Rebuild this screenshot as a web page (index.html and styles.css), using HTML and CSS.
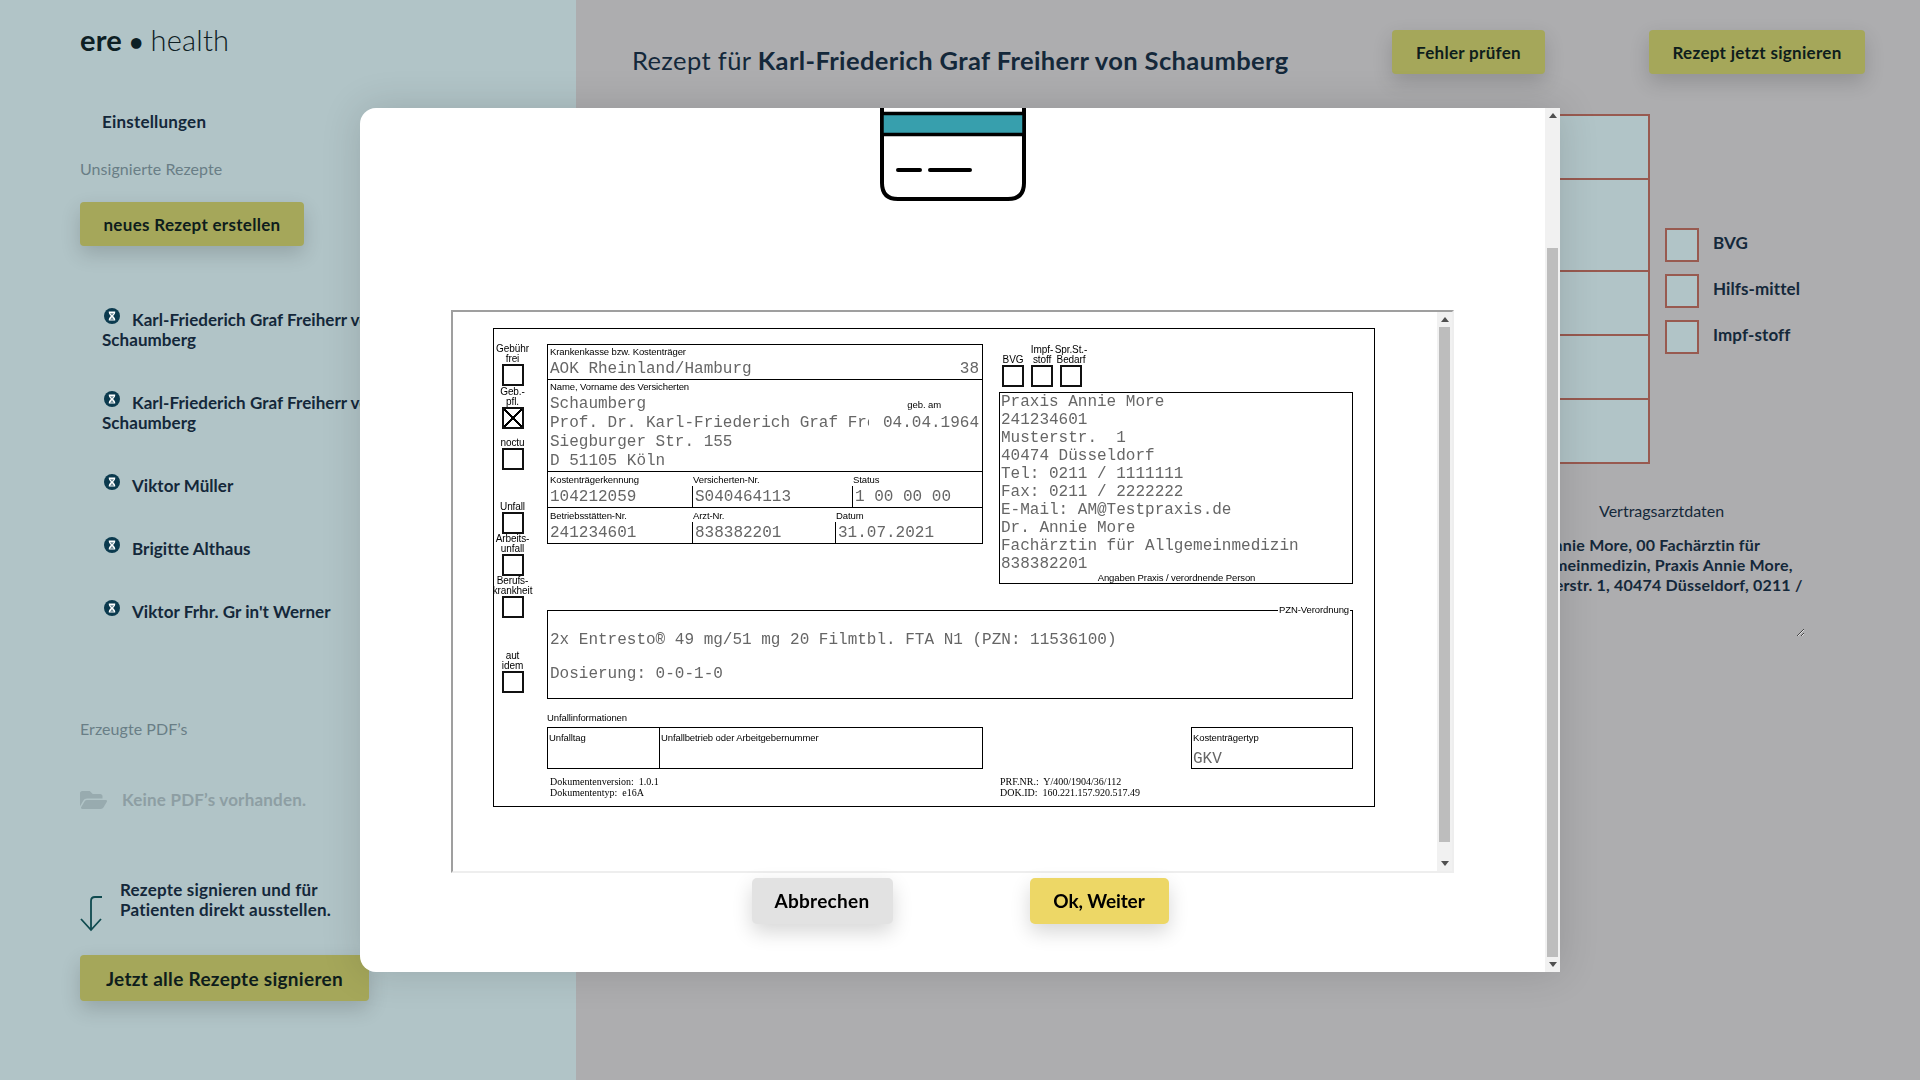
FILE: index.html
```html
<!DOCTYPE html>
<html lang="de">
<head>
    <meta charset="utf-8"/>
    <title>ere health</title>
    <link rel="stylesheet" href="styles.css">
</head>
<body>
    <svg class="defs" width="0" height="0">
        <symbol id="hourglass" viewBox="0 0 16 16">
            <circle cx="8" cy="8" r="8" fill="#0b3a4e"/>
            <path d="M4.800 3.400h6.400v1.200c0 1.500-1.500 2.400-2 3.400.5 1 2 1.900 2 3.400v1.200H4.800v-1.200c0-1.500 1.500-2.400 2-3.400-.5-1-2-1.900-2-3.400z" fill="#fff"/>
            <path d="M6 5.200h4L8 7.600zM8 9l2 2.700H6z" fill="#6d8a96"/>
        </symbol>
    </svg>

    <aside class="sidebar">
        <div class="logo"><b>ere</b> <span class="logo-dot">•</span> <span class="logo-light">health</span></div>
        <div class="settings">Einstellungen</div>
        <div class="side-title">Unsignierte Rezepte</div>
        <button class="btn new-btn">neues Rezept erstellen</button>
        <ul class="rx-list">
            <li><svg class="hourglass"><use href="#hourglass"/></svg>Karl-Friederich Graf Freiherr von<br>Schaumberg</li>
            <li><svg class="hourglass"><use href="#hourglass"/></svg>Karl-Friederich Graf Freiherr von<br>Schaumberg</li>
            <li><svg class="hourglass"><use href="#hourglass"/></svg>Viktor Müller</li>
            <li><svg class="hourglass"><use href="#hourglass"/></svg>Brigitte Althaus</li>
            <li><svg class="hourglass"><use href="#hourglass"/></svg>Viktor Frhr. Gr in't Werner</li>
        </ul>
        <div class="side-title pdf-title">Erzeugte PDF’s</div>
        <div class="no-pdf">
            <svg class="folder" viewBox="0 0 576 512"><path d="M572.694 292.093L500.27 416.248A63.997 63.997 0 0 1 444.989 448H45.025c-18.523 0-30.064-20.093-20.731-36.093l72.424-124.155A64 64 0 0 1 152 256h399.964c18.523 0 30.064 20.093 20.73 36.093zM152 224h328v-48c0-26.51-21.49-48-48-48H272l-64-64H48C21.49 64 0 85.49 0 112v278.046l69.077-118.418C86.214 242.25 117.989 224 152 224z"/></svg>
            Keine PDF’s vorhanden.
        </div>
        <div class="sign-hint">
            <svg class="hint-arrow" viewBox="0 0 24 36" fill="none" stroke="#0f4a4f" stroke-width="1.8"><path d="M22 1h-7q-4 0-4 4v29"/><path d="M1 23l10 11 10-11"/></svg>
            <p>Rezepte signieren und für<br>Patienten direkt ausstellen.</p>
        </div>
        <button class="btn sign-all">Jetzt alle Rezepte signieren</button>
    </aside>

    <main class="main">
        <header class="main-head">
            <h1>Rezept für <b>Karl-Friederich Graf Freiherr von Schaumberg</b></h1>
            <button class="btn head-btn check-btn">Fehler prüfen</button>
            <button class="btn head-btn sign-btn">Rezept jetzt signieren</button>
        </header>
        <div class="rx-form">
            <div class="rx-lines">
                <div class="rx-line"></div>
                <div class="rx-line rx-line-tall"></div>
                <div class="rx-line"></div>
                <div class="rx-line"></div>
                <div class="rx-line"></div>
            </div>
            <div class="rx-checks">
                <label class="rx-check"><span class="rx-box"></span>BVG</label>
                <label class="rx-check"><span class="rx-box"></span>Hilfs-mittel</label>
                <label class="rx-check"><span class="rx-box"></span>Impf-stoff</label>
            </div>
        </div>
        <div class="doctor">
            <div class="doctor-title">Vertragsarztdaten</div>
            <textarea class="doctor-text" readonly>Dr. Annie More, 00 Fachärztin für
Allgemeinmedizin, Praxis Annie More,
Musterstr. 1, 40474 Düsseldorf, 0211 /</textarea>
        </div>
    </main>

    <div class="modal">
        <div class="modal-body">
            <svg class="card-icon" viewBox="0 0 146 93">
                <path d="M2 0v75q0 16 16 16h110q16 0 16-16V0" fill="#fff" stroke="#000" stroke-width="4"/>
                <rect x="2" y="5.500" width="142" height="21" fill="#379fad" stroke="#000" stroke-width="3.500"/>
                <path d="M18 62h22M50 62h40" stroke="#000" stroke-width="4" stroke-linecap="round"/>
            </svg>

            <div class="viewer">
                <div class="viewer-page">
                    <div class="sheet">
                        <div class="flags">
                            <div class="flag"><span>Gebühr<br>frei</span><i></i></div>
                            <div class="flag flag-geb"><span>Geb.-<br>pfl.</span><i class="crossed"></i></div>
                            <div class="flag flag-noctu"><span>noctu</span><i></i></div>
                            <div class="flag flag-unfall"><span>Unfall</span><i></i></div>
                            <div class="flag"><span>Arbeits-<br>unfall</span><i></i></div>
                            <div class="flag"><span>Berufs-<br>krankheit</span><i></i></div>
                            <div class="flag flag-idem"><span>aut<br>idem</span><i></i></div>
                        </div>
                        <div class="sheet-body">
                            <div class="sheet-top">
                                <div class="patient">
                                    <div class="patient-row row-kasse">
                                        <div class="lbl">Krankenkasse bzw. Kostenträger</div>
                                        <div class="val spread"><span>AOK Rheinland/Hamburg</span><span>38</span></div>
                                    </div>
                                    <div class="patient-row row-name">
                                        <div class="lbl">Name, Vorname des Versicherten</div>
                                        <div class="val name-val spread"><span>Schaumberg</span><span class="lbl born">geb. am</span></div>
                                        <div class="val name-val spread"><span class="clip">Prof. Dr. Karl-Friederich Graf Fre</span><span>04.04.1964</span></div>
                                        <div class="val name-val">Siegburger Str. 155</div>
                                        <div class="val name-val">D 51105 Köln</div>
                                    </div>
                                    <div class="patient-row row-ids">
                                        <div class="cell cell-a"><div class="lbl">Kostenträgerkennung</div><div class="val">104212059</div></div>
                                        <div class="cell cell-b"><div class="lbl">Versicherten-Nr.</div><div class="val split">S040464113</div></div>
                                        <div class="cell"><div class="lbl">Status</div><div class="val split">1 00 00 00</div></div>
                                    </div>
                                    <div class="patient-row row-ids">
                                        <div class="cell cell-a"><div class="lbl">Betriebsstätten-Nr.</div><div class="val">241234601</div></div>
                                        <div class="cell cell-c"><div class="lbl">Arzt-Nr.</div><div class="val split">838382201</div></div>
                                        <div class="cell"><div class="lbl">Datum</div><div class="val split">31.07.2021</div></div>
                                    </div>
                                </div>
                                <div class="practice-col">
                                    <div class="mini-checks">
                                        <div class="mini"><span>BVG</span><i></i></div>
                                        <div class="mini"><span>Impf-<br>stoff</span><i></i></div>
                                        <div class="mini"><span>Spr.St.-<br>Bedarf</span><i></i></div>
                                    </div>
                                    <div class="practice">
                                        <div class="val">Praxis Annie More</div>
                                        <div class="val">241234601</div>
                                        <div class="val">Musterstr.&nbsp; 1</div>
                                        <div class="val">40474 Düsseldorf</div>
                                        <div class="val">Tel: 0211 / 1111111</div>
                                        <div class="val">Fax: 0211 / 2222222</div>
                                        <div class="val">E-Mail: AM@Testpraxis.de</div>
                                        <div class="val">Dr. Annie More</div>
                                        <div class="val">Fachärztin für Allgemeinmedizin</div>
                                        <div class="val">838382201</div>
                                        <div class="lbl practice-note">Angaben Praxis / verordnende Person</div>
                                    </div>
                                </div>
                            </div>

                            <fieldset class="pzn">
                                <legend align="right">PZN-Verordnung</legend>
                                <div class="val pzn-line">2x Entresto® 49 mg/51 mg 20 Filmtbl. FTA N1 (PZN: 11536100)</div>
                                <div class="val pzn-line">Dosierung: 0-0-1-0</div>
                            </fieldset>

                            <div class="lbl accident-title">Unfallinformationen</div>
                            <div class="accident">
                                <div class="accident-box">
                                    <div class="accident-day lbl">Unfalltag</div>
                                    <div class="accident-firm lbl">Unfallbetrieb oder Arbeitgebernummer</div>
                                </div>
                                <div class="cost-box">
                                    <div class="lbl">Kostenträgertyp</div>
                                    <div class="val">GKV</div>
                                </div>
                            </div>

                            <div class="doc-meta">
                                <div class="doc-meta-col">Dokumentenversion:&nbsp; 1.0.1<br>Dokumententyp:&nbsp; e16A</div>
                                <div class="doc-meta-col">PRF.NR.:&nbsp; Y/400/1904/36/112<br>DOK.ID:&nbsp; 160.221.157.920.517.49</div>
                            </div>
                        </div>
                    </div>
                </div>
                <div class="scrollbar">
                    <div class="arrow arrow-up"></div>
                    <div class="thumb viewer-thumb"></div>
                    <div class="arrow arrow-down"></div>
                </div>
            </div>

            <div class="modal-actions">
                <button class="btn cancel-btn">Abbrechen</button>
                <button class="btn ok-btn">Ok, Weiter</button>
            </div>
        </div>
        <div class="scrollbar">
            <div class="arrow arrow-up"></div>
            <div class="thumb modal-thumb"></div>
            <div class="arrow arrow-down"></div>
        </div>
    </div>
</body>
</html>
```
FILE: styles.css
```css
* {
    box-sizing: border-box;
}
html, body {
    margin: 0;
    height: 1080px;
    overflow: hidden;
}
body {
    display: flex;
    font-family: Lato, "Noto Sans", sans-serif;
    color: #14283a;
    background: #adadaf;
}
button {
    font-family: inherit;
}
.defs {
    position: absolute;
}
.btn {
    border: 0;
    border-radius: 4px;
    background: #a5a75a;
    color: #0e1d1c;
    font-weight: 700;
    box-shadow: 0 8px 20px rgba(0, 0, 0, 0.16);
    padding: 0;
}

/* sidebar */
.sidebar {
    flex: none;
    width: 576px;
    height: 1080px;
    padding: 20px 0 0 80px;
    background: #b1c4c7;
    font-size: 17px;
    font-weight: 700;
    line-height: 20px;
    letter-spacing: 0.2px;
}
.logo {
    height: 41px;
    font-size: 29px;
    line-height: 40px;
    color: #0d2024;
    letter-spacing: 0.2px;
}
.logo b {
    font-weight: 700;
}
.logo-dot {
    font-size: 24px;
}
.logo-light {
    font-weight: 300;
}
.settings {
    margin: 51px 0 0 22px;
}
.side-title {
    margin-top: 27px;
    font-size: 16px;
    font-weight: 400;
    color: #697e86;
    letter-spacing: 0.05px;
}
.new-btn {
    display: block;
    width: 224px;
    height: 44px;
    margin-top: 23px;
    font-size: 17px;
    letter-spacing: 0.3px;
}
.rx-list {
    list-style: none;
    margin: 64px 0 0 22px;
    padding: 0;
    white-space: nowrap;
    letter-spacing: 0.05px;
}
.rx-list li {
    margin-bottom: 43px;
}
.hourglass {
    width: 16px;
    height: 16px;
    margin: -4px 12px 0 2px;
    vertical-align: 2px;
}
.pdf-title {
    margin-top: 97px;
}
.no-pdf {
    display: flex;
    align-items: center;
    gap: 15px;
    margin-top: 49px;
    color: #8d9ea3;
}
.folder {
    width: 27px;
    height: 24px;
    fill: #98abaf;
}
.sign-hint {
    display: flex;
    align-items: flex-end;
    gap: 16px;
    margin-top: 68px;
}
.sign-hint p {
    margin: 0;
}
.hint-arrow {
    flex: none;
    width: 24px;
    height: 36px;
    margin-bottom: -12px;
}
.sign-all {
    display: block;
    width: 289px;
    height: 46px;
    margin-top: 35px;
    font-size: 19px;
    letter-spacing: 0.3px;
}

/* page behind the dialog */
.main {
    flex: 1;
    min-width: 0;
}
.main-head {
    display: flex;
    align-items: center;
    height: 44px;
    margin-top: 30px;
    padding: 0 55px 0 56px;
}
.main-head h1 {
    flex: 1;
    margin: 0;
    padding-top: 16px;
    font-size: 25.5px;
    font-weight: 400;
    letter-spacing: 0.38px;
    white-space: nowrap;
}
.head-btn {
    height: 44px;
    font-size: 17px;
    letter-spacing: 0.3px;
}
.check-btn {
    width: 153px;
    margin-right: 104px;
}
.sign-btn {
    width: 216px;
}
.rx-form {
    display: flex;
    margin: 40px 0 0 324px;
}
.rx-lines {
    width: 750px;
    border: 2px solid #985a50;
    border-bottom: 0;
}
.rx-line {
    height: 64px;
    background: #b1c4c7;
    border-bottom: 2px solid #985a50;
}
.rx-line-tall {
    height: 92px;
}
.rx-checks {
    display: flex;
    flex-direction: column;
    gap: 12px;
    margin: 114px 0 0 15px;
}
.rx-check {
    display: flex;
    align-items: flex-start;
    gap: 14px;
    font-size: 17px;
    font-weight: 700;
    line-height: 30px;
    letter-spacing: 0.1px;
}
.rx-box {
    width: 34px;
    height: 34px;
    background: #b1c4c7;
    border: 2px solid #985a50;
}
.doctor {
    margin: 37px 0 0 941px;
}
.doctor-title {
    margin-left: 82px;
    font-size: 16px;
    line-height: 20px;
}
.doctor-text {
    display: block;
    width: 288px;
    height: 102px;
    margin-top: 14px;
    padding: 0;
    border: 0;
    outline: 0;
    background: transparent;
    color: #14283a;
    font: 700 16px/20px Lato, "Noto Sans", sans-serif;
    letter-spacing: 0.2px;
    white-space: pre;
    overflow: hidden;
}

/* dialog */
.modal {
    position: fixed;
    left: 360px;
    top: 108px;
    display: flex;
    width: 1200px;
    height: 864px;
    overflow: hidden;
    background: #fff;
    border-radius: 16px 0 0 16px;
    box-shadow: 0 0 40px rgba(0, 0, 0, 0.14);
}
.modal-body {
    flex: 1;
    min-width: 0;
}
.card-icon {
    display: block;
    width: 146px;
    height: 93px;
    margin: 0 auto 109px;
}
.viewer {
    display: flex;
    width: 1003px;
    height: 563px;
    margin-left: 91px;
    border: 2px solid #eee;
    border-top-color: #9f9f9f;
    border-left-color: #9f9f9f;
}
.viewer-page {
    flex: 1;
    padding: 16px 0 0 40px;
    overflow: hidden;
}
.modal-actions {
    display: flex;
    justify-content: center;
    gap: 137px;
    margin-top: 5px;
    padding-left: 15px;
}
.cancel-btn, .ok-btn {
    height: 46px;
    padding-bottom: 2px;
    color: #000;
    font-size: 19px;
    letter-spacing: 0.3px;
    border-radius: 5px;
}
.cancel-btn {
    width: 141px;
    background: #e2e2e2;
}
.ok-btn {
    width: 139px;
    background: #edd766;
    letter-spacing: -0.1px;
}

/* scrollbars */
.scrollbar {
    flex: none;
    display: flex;
    flex-direction: column;
    align-items: center;
    width: 15px;
    background: #f1f1f1;
}
.arrow {
    flex: none;
    display: flex;
    justify-content: center;
    align-items: center;
    width: 100%;
    height: 15px;
}
.arrow::before {
    content: "";
    border: 4px solid transparent;
}
.arrow-up::before {
    border-top: 0;
    border-bottom: 5px solid #505050;
}
.arrow-down {
    margin-top: auto;
}
.arrow-down::before {
    border-bottom: 0;
    border-top: 5px solid #505050;
}
.thumb {
    flex: none;
    width: 11px;
    background: #bdbdbd;
}
.modal-thumb {
    height: 709px;
    margin-top: 125px;
}
.viewer-thumb {
    height: 515px;
}

/* prescription form */
.sheet {
    display: flex;
    width: 882px;
    height: 479px;
    border: 1px solid #000;
    color: #000;
    font-family: "Liberation Sans", Arial, sans-serif;
}
.flags {
    flex: none;
    width: 53px;
    padding: 15px 16px 0 0;
}
.flag {
    display: flex;
    flex-direction: column;
    align-items: center;
    font-size: 10px;
    line-height: 10px;
    letter-spacing: -0.1px;
    text-align: center;
    white-space: nowrap;
}
.flag i, .mini i {
    display: block;
    flex: none;
    width: 22px;
    height: 22px;
    border: 2px solid #111;
}
.flag-geb {
    margin-top: 1px;
}
.flag-noctu {
    margin-top: 9px;
}
.flag-unfall {
    margin-top: 32px;
}
.flag-idem {
    margin-top: 33px;
}
.crossed {
    background:
        linear-gradient(45deg, transparent 46%, #000 46%, #000 54%, transparent 54%),
        linear-gradient(-45deg, transparent 46%, #000 46%, #000 54%, transparent 54%);
}
.sheet-body {
    flex: none;
    width: 806px;
    padding-top: 15px;
}
.sheet-top {
    display: flex;
    gap: 16px;
    align-items: flex-start;
}
.lbl {
    font-size: 9.5px;
    line-height: 10px;
    letter-spacing: -0.1px;
    white-space: nowrap;
}
.val {
    font-family: "Liberation Mono", "Courier New", monospace;
    font-size: 16px;
    font-weight: 400;
    line-height: 18px;
    color: #666;
    white-space: pre;
}
.spread {
    display: flex;
    justify-content: space-between;
}
.clip {
    width: 319px;
    overflow: hidden;
}
.patient {
    flex: none;
    width: 436px;
    height: 200px;
    border: 1px solid #000;
}
.patient-row {
    padding: 2px 3px 0 2px;
    border-bottom: 1px solid #000;
}
.patient-row:last-child {
    border-bottom: 0;
}
.row-kasse {
    height: 35px;
}
.row-kasse .val {
    margin-top: 3px;
}
.row-name {
    height: 92px;
}
.row-name .lbl:first-child {
    margin-bottom: 3px;
}
.name-val {
    line-height: 19px;
    align-items: center;
}
.born {
    margin-right: 38px;
    color: #000;
    font-family: "Liberation Sans", Arial, sans-serif;
}
.row-ids {
    display: flex;
    height: 36px;
    padding: 3px 0 0 2px;
}
.cell {
    flex: none;
}
.cell-a {
    width: 142px;
}
.cell-b {
    width: 160px;
}
.cell-c {
    width: 143px;
}
.cell .lbl {
    padding-left: 1px;
}
.cell-a .lbl {
    padding-left: 0;
}
.cell .val {
    height: 21px;
    margin-top: 1px;
    line-height: 22px;
}
.split {
    padding-left: 2px;
    border-left: 1px solid #000;
}
.practice-col {
    flex: 1;
}
.mini-checks {
    display: flex;
    align-items: flex-end;
    gap: 7px;
    height: 43px;
    margin: 0 0 5px 3px;
}
.mini {
    display: flex;
    flex-direction: column;
    align-items: center;
    width: 22px;
    font-size: 10px;
    line-height: 10px;
    letter-spacing: -0.1px;
    text-align: center;
    white-space: nowrap;
}
.practice {
    height: 192px;
    padding-left: 1px;
    border: 1px solid #000;
}
.practice-note {
    text-align: center;
}
.pzn {
    min-width: 0;
    margin: 21px 0 0;
    padding: 8px 0 0 2px;
    height: 94px;
    border: 1px solid #000;
}
.pzn legend {
    padding: 0 1px;
    margin-right: 2px;
    font-size: 9.5px;
    line-height: 10px;
    letter-spacing: -0.1px;
}
.pzn-line {
    line-height: 34px;
}
.accident-title {
    margin-top: 14px;
}
.accident {
    display: flex;
    justify-content: space-between;
    margin-top: 4px;
}
.accident-box {
    display: flex;
    width: 436px;
    height: 42px;
    border: 1px solid #000;
}
.accident-day {
    width: 112px;
    padding: 5px 0 0 1px;
    border-right: 1px solid #000;
}
.accident-firm {
    padding: 5px 0 0 1px;
}
.cost-box {
    width: 162px;
    height: 42px;
    padding: 5px 0 0 1px;
    border: 1px solid #000;
}
.cost-box .val {
    margin-top: 7px;
}
.doc-meta {
    display: flex;
    margin-top: 7px;
    padding-left: 3px;
    font-family: "Liberation Serif", "Times New Roman", serif;
    font-size: 10px;
    line-height: 11px;
}
.doc-meta-col {
    flex: none;
    width: 450px;
}
```
